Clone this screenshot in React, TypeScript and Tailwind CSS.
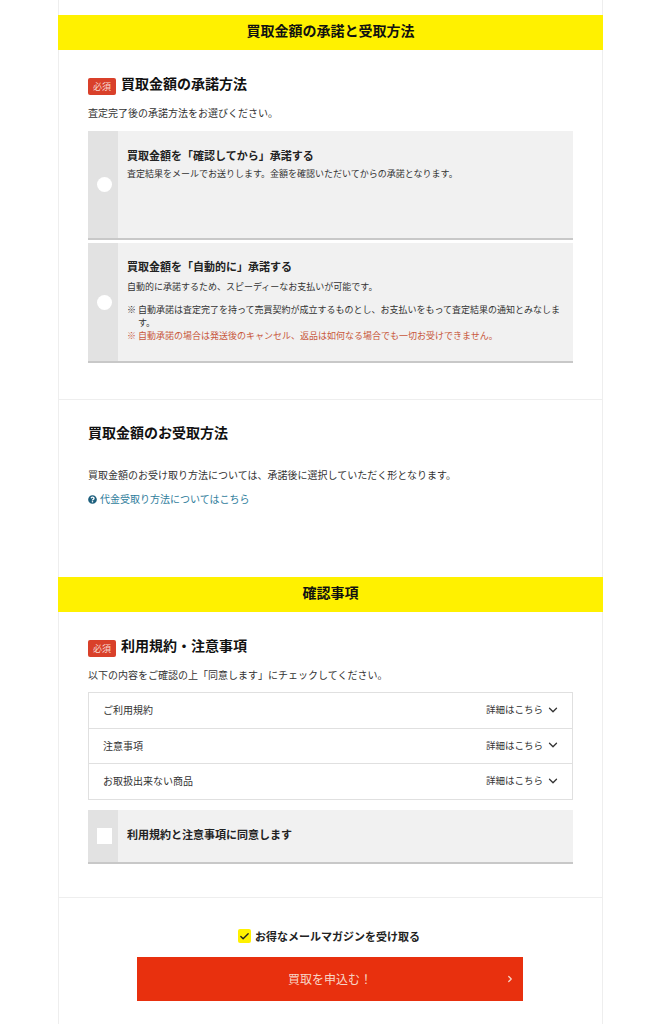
import { Check, ChevronDown, ChevronRight } from "lucide-react";
import { FaQuestionCircle } from "react-icons/fa";

const termsRows = [
  { label: "ご利用規約", rowClass: "h-[35px]" },
  { label: "注意事項", rowClass: "h-[35px] border-t border-[#e0e0e0]" },
  { label: "お取扱出来ない商品", rowClass: "h-[36px] border-t border-[#e0e0e0]" },
];

function Band({ title }: { title: string }) {
  return (
    <div className="flex h-[35px] items-center justify-center bg-[#fff100] pb-[4px] text-[14px] font-bold text-[#111]">
      {title}
    </div>
  );
}

function RequiredHeading({ title }: { title: string }) {
  return (
    <div className="flex h-[18px] items-center">
      <span className="mt-[1px] flex h-[17px] w-[28px] items-center justify-center rounded-[2px] bg-[#d9402a] text-[9px] text-[#f8d8d0]">
        必須
      </span>
      <h2 className="mb-[6px] ml-[5px] text-[14px] font-bold leading-[18px] text-[#111]">
        {title}
      </h2>
    </div>
  );
}

export default function App() {
  return (
    <div className="min-h-[1024px] bg-white font-['Noto_Sans_CJK_JP',sans-serif] text-[#333]">
      <div className="ml-[58px] min-h-[1024px] w-[545px] border-x border-[#eeeeee] pt-[15px]">
        <div className="-mx-px">
          <Band title="買取金額の承諾と受取方法" />
        </div>

        {/* Approval method */}
        <section className="border-b border-[#eeeeee] px-[29px] pt-[27px] pb-[36px]">
          <RequiredHeading title="買取金額の承諾方法" />
          <p className="mt-[11px] text-[10px] leading-[14px]">
            査定完了後の承諾方法をお選びください。
          </p>

          <div className="mt-[11px] flex h-[109px] border-b-2 border-[#c8c8c8] bg-[#f1f1f1]">
            <div className="flex w-[30px] shrink-0 items-center justify-center bg-[#e2e2e2] pl-[2px]">
              <span className="h-[15px] w-[15px] rounded-full bg-white" />
            </div>
            <div className="pt-[17px] pl-[9px]">
              <p className="text-[11px] leading-[14px] font-bold text-[#222]">
                買取金額を「確認してから」承諾する
              </p>
              <p className="mt-[5px] text-[9px] leading-[13px]">
                査定結果をメールでお送りします。金額を確認いただいてからの承諾となります。
              </p>
            </div>
          </div>

          <div className="mt-[3px] flex h-[120px] border-b-2 border-[#c8c8c8] bg-[#f1f1f1]">
            <div className="flex w-[30px] shrink-0 items-center justify-center bg-[#e2e2e2] pl-[2px]">
              <span className="h-[15px] w-[15px] rounded-full bg-white" />
            </div>
            <div className="pt-[16px] pr-[9px] pl-[9px]">
              <p className="text-[11px] leading-[14px] font-bold text-[#222]">
                買取金額を「自動的に」承諾する
              </p>
              <p className="mt-[7px] text-[9px] leading-[13px]">
                自動的に承諾するため、スピーディーなお支払いが可能です。
              </p>
              <p className="mt-[10px] pl-[11px] -indent-[11px] text-[9px] leading-[13px]">
                ※ 自動承諾は査定完了を持って売買契約が成立するものとし、お支払いをもって査定結果の通知とみなします。
              </p>
              <p className="pl-[11px] -indent-[11px] text-[9px] leading-[13px] text-[#c8583c]">
                ※ 自動承諾の場合は発送後のキャンセル、返品は如何なる場合でも一切お受けできません。
              </p>
            </div>
          </div>
        </section>

        {/* Receiving method */}
        <section className="px-[29px] pt-[23px] pb-[71px]">
          <h2 className="text-[14px] leading-[18px] font-bold text-[#111]">
            買取金額のお受取方法
          </h2>
          <p className="mt-[27px] text-[10px] leading-[14px]">
            買取金額のお受け取り方法については、承諾後に選択していただく形となります。
          </p>
          <a className="mt-[10px] flex items-center text-[10px] leading-[14px] text-[#2f7d9c]">
            <FaQuestionCircle className="mr-[3px] h-[9px] w-[9px] text-[#1d5f7d]" />
            代金受取り方法についてはこちら
          </a>
        </section>

        <div className="-mx-px">
          <Band title="確認事項" />
        </div>

        {/* Terms */}
        <section className="border-b border-[#eeeeee] px-[29px] pt-[27px] pb-[33px]">
          <RequiredHeading title="利用規約・注意事項" />
          <p className="mt-[11px] text-[10px] leading-[14px]">
            以下の内容をご確認の上「同意します」にチェックしてください。
          </p>

          <div className="mt-[10px] border border-[#e0e0e0]">
            {termsRows.map((row) => (
              <div
                key={row.label}
                className={`flex items-center justify-between pr-[12px] pb-[2px] pl-[14px] text-[10px] ${row.rowClass}`}
              >
                <span>{row.label}</span>
                <span className="flex items-center text-[9.5px]">
                  詳細はこちら
                  <ChevronDown className="ml-[3px] h-[14px] w-[14px] text-[#333]" strokeWidth={2.25} />
                </span>
              </div>
            ))}
          </div>

          <div className="mt-[10px] flex h-[54px] border-b-2 border-[#c8c8c8] bg-[#f1f1f1]">
            <div className="flex w-[30px] shrink-0 items-center justify-center bg-[#e2e2e2] pl-[2px]">
              <span className="h-[16px] w-[15px] bg-white" />
            </div>
            <p className="pt-[17px] pl-[9px] text-[11px] leading-[14px] font-bold text-[#222]">
              利用規約と注意事項に同意します
            </p>
          </div>
        </section>

        {/* Submit */}
        <section className="px-[78px] pt-[31px]">
          <label className="flex items-center justify-center pr-[3px] text-[11px] leading-[14px] font-bold text-[#222]">
            <span className="mr-[4px] flex h-[14px] w-[13px] items-center justify-center rounded-[2px] bg-[#fff100]">
              <Check className="h-[11px] w-[11px] text-[#222]" strokeWidth={3} />
            </span>
            お得なメールマガジンを受け取る
          </label>
          <button className="relative mt-[14px] flex h-[44px] w-[386px] items-center justify-center bg-[#e8300e] text-[12px] text-[#f7d6c8]">
            買取を申込む！
            <ChevronRight className="absolute right-[8px] h-[10px] w-[10px] text-[#f7d6c8]" strokeWidth={3} />
          </button>
        </section>
      </div>
    </div>
  );
}
